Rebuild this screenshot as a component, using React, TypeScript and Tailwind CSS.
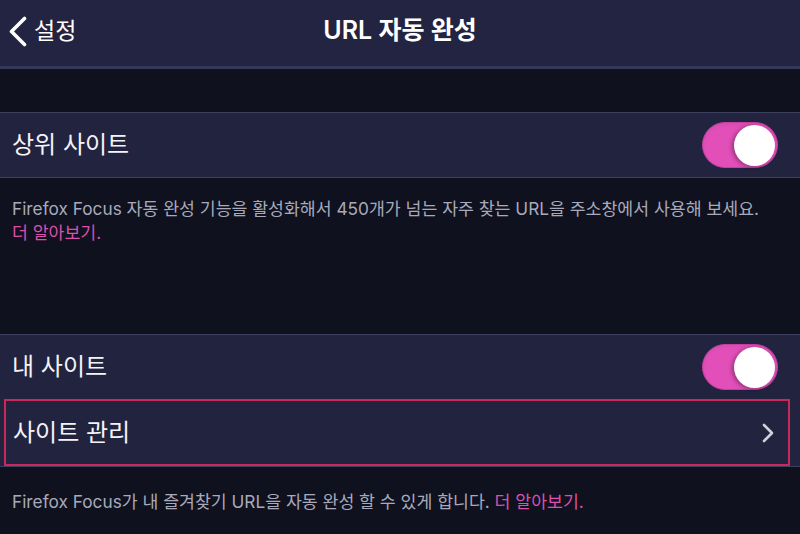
const font = { fontFamily: 'Inter, "Noto Sans CJK KR", sans-serif' };

const Toggle = () => (
  <div className="w-[76px] h-[46px] rounded-full bg-[#e24fb9] border border-[#c43f9e] relative shadow-inner">
    <div className="absolute right-[2px] top-[2px] w-[41px] h-[41px] rounded-full bg-white shadow-[-2px_1px_4px_rgba(0,0,0,0.35)]" />
  </div>
);

const App = () => {
  return (
    <div className="w-[800px] h-[534px] bg-[#10111f] overflow-hidden text-white" style={font}>
      <header className="h-[69px] bg-[#222441] border-b-[3px] border-[#35385a] flex items-center relative">
        <div className="flex items-center pl-[8px] -mt-[4px]">
          <svg width="20" height="31" viewBox="0 0 20 31" fill="none">
            <path d="M16.5 2.5 L3.5 15.5 L16.5 28.5" stroke="white" strokeWidth="3.6" strokeLinecap="round" strokeLinejoin="round" />
          </svg>
          <span className="text-[23px] ml-[6px]">설정</span>
        </div>
        <h1 className="absolute left-0 right-0 text-center text-[25px] font-semibold -mt-[4px] pointer-events-none">
          URL 자동 완성
        </h1>
      </header>

      <div className="h-[43px]" />

      <div className="h-[66px] bg-[#21233f] border-y-[1.5px] border-[#3c3f5e] flex items-center justify-between pl-[12px] pr-[22px]">
        <span className="text-[24px] text-[#f4f4f8]">상위 사이트</span>
        <Toggle />
      </div>

      <div className="h-[156px] pl-[12px] pt-[19px] text-[17.25px] leading-[24px] text-[#a8aabb]">
        <p>
          Firefox Focus 자동 완성 기능을 활성화해서 450개가 넘는 자주 찾는 URL을 주소창에서 사용해 보세요.
          <br />
          <span className="text-[#dc4fae]">더 알아보기.</span>
        </p>
      </div>

      <div className="bg-[#21233f] border-y-[1.5px] border-[#3c3f5e]">
        <div className="h-[64px] flex items-center justify-between pl-[12px] pr-[22px]">
          <span className="text-[24px] text-[#f4f4f8]">내 사이트</span>
          <Toggle />
        </div>
        <div className="h-[67px] ml-[4px] mr-[10px] border-2 border-[#c8285a] flex items-center justify-between pl-[7px] pr-[14px]">
          <span className="text-[24px] text-[#f4f4f8]">사이트 관리</span>
          <svg width="12" height="20" viewBox="0 0 12 20" fill="none">
            <path d="M2 2 L10 10 L2 18" stroke="#d0d1da" strokeWidth="2.6" strokeLinecap="round" strokeLinejoin="round" />
          </svg>
        </div>
      </div>

      <p className="pl-[12px] pt-[23px] text-[17.25px] leading-[24px] text-[#a8aabb]">
        Firefox Focus가 내 즐겨찾기 URL을 자동 완성 할 수 있게 합니다.{" "}
        <span className="text-[#dc4fae]">더 알아보기.</span>
      </p>
    </div>
  );
};

export default App;
